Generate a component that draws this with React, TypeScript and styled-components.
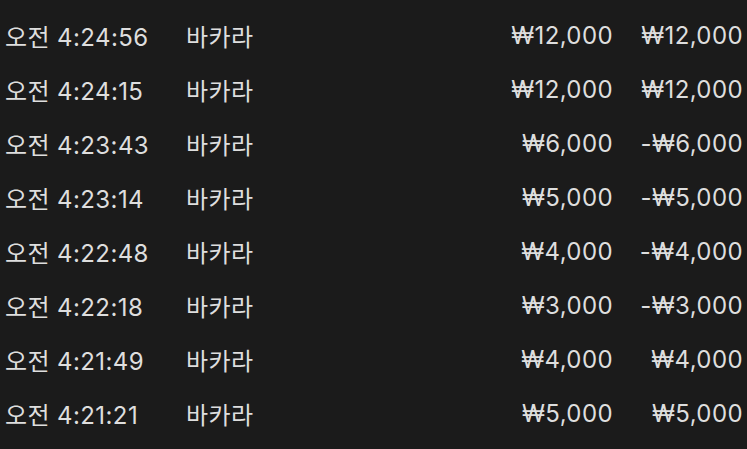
import styled, { createGlobalStyle } from "styled-components";

const GlobalStyle = createGlobalStyle`
    html, body {
        margin: 0;
        padding: 0;
        background: #1b1b1b;
    }
    body {
        font-family: Inter, "Noto Sans CJK KR", sans-serif;
        color: #dedede;
    }
`

type Row = {time: string, game: string, bet: string, result: string}

const rows: Row[] = [
    {time: "오전 4:24:56", game: "바카라", bet: "₩12,000", result: "₩12,000"},
    {time: "오전 4:24:15", game: "바카라", bet: "₩12,000", result: "₩12,000"},
    {time: "오전 4:23:43", game: "바카라", bet: "₩6,000", result: "-₩6,000"},
    {time: "오전 4:23:14", game: "바카라", bet: "₩5,000", result: "-₩5,000"},
    {time: "오전 4:22:48", game: "바카라", bet: "₩4,000", result: "-₩4,000"},
    {time: "오전 4:22:18", game: "바카라", bet: "₩3,000", result: "-₩3,000"},
    {time: "오전 4:21:49", game: "바카라", bet: "₩4,000", result: "₩4,000"},
    {time: "오전 4:21:21", game: "바카라", bet: "₩5,000", result: "₩5,000"},
]

const List = styled.div`
    width: 747px;
    height: 449px;
    padding: 8px 4px 0 5px;
    box-sizing: border-box;
    display: flex;
    flex-direction: column;
    overflow: hidden;
`

const RowBox = styled.div`
    height: 54px;
    display: grid;
    grid-template-columns: 181px 1fr 130px 130px;
    align-items: center;
    font-size: 24px;
    letter-spacing: 0.4px;
`

const Cell = styled.span<{$right?: boolean}>`
    white-space: nowrap;
    text-align: ${p => p.$right ? "right" : "left"};
`

export default function App() {
    return (
        <>
            <GlobalStyle/>
            <List>
                {rows.map((r, i) => (
                    <RowBox key={i}>
                        <Cell>{r.time}</Cell>
                        <Cell>{r.game}</Cell>
                        <Cell $right>{r.bet}</Cell>
                        <Cell $right>{r.result}</Cell>
                    </RowBox>
                ))}
            </List>
        </>
    )
}
